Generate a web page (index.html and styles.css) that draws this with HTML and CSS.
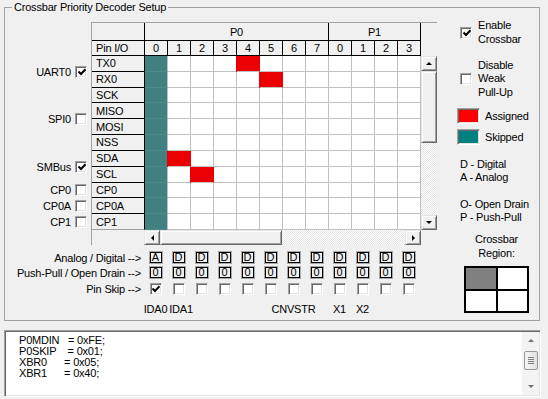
FILE: index.html
```html
<!DOCTYPE html>
<html lang="en">
  <head>
    <meta charset="UTF-8" />
    <meta name="viewport" content="width=device-width, initial-scale=1.0" />
    <title>Crossbar Priority Decoder Setup</title>
    <link rel="stylesheet" href="styles.css">
  </head>
  <body>
    <fieldset id="crossbar">
      <legend>Crossbar Priority Decoder Setup</legend>

      <div id="mainSide">
        <div id="topSide">
          <!-- peripherals, lined up with the pin rows -->
          <div id="periph">
            <div class="per uart">UART0 <span class="cb"><svg width="8" height="8" viewBox="0 0 8 8"><polyline points="0.5,3.5 3,6 7.5,1.2" /></svg></span></div>
            <div class="per spi">SPI0 <span class="cb"></span></div>
            <div class="per smb">SMBus <span class="cb"><svg width="8" height="8" viewBox="0 0 8 8"><polyline points="0.5,3.5 3,6 7.5,1.2" /></svg></span></div>
            <div class="per cp0">CP0 <span class="cb"></span></div>
            <div class="per cp0a">CP0A <span class="cb"></span></div>
            <div class="per cp1">CP1 <span class="cb"></span></div>
          </div>

          <div id="table">
            <div class="h1"><b></b><b>P0</b><b>P1</b></div>
            <div class="h2">
              <b>Pin I/O</b><b>0</b><b>1</b><b>2</b><b>3</b><b>4</b><b>5</b><b>6</b><b>7</b><b>0</b><b>1</b><b>2</b><b>3</b>
            </div>
            <div class="body">
              <div class="rows">
                <span>TX0</span><i class="s"></i><i></i><i></i><i></i><i class="a"></i><i></i><i></i><i></i><i></i><i></i><i></i><i></i>
                <span>RX0</span><i class="s"></i><i></i><i></i><i></i><i></i><i class="a"></i><i></i><i></i><i></i><i></i><i></i><i></i>
                <span>SCK</span><i class="s"></i><i></i><i></i><i></i><i></i><i></i><i></i><i></i><i></i><i></i><i></i><i></i>
                <span>MISO</span><i class="s"></i><i></i><i></i><i></i><i></i><i></i><i></i><i></i><i></i><i></i><i></i><i></i>
                <span>MOSI</span><i class="s"></i><i></i><i></i><i></i><i></i><i></i><i></i><i></i><i></i><i></i><i></i><i></i>
                <span>NSS</span><i class="s"></i><i></i><i></i><i></i><i></i><i></i><i></i><i></i><i></i><i></i><i></i><i></i>
                <span>SDA</span><i class="s"></i><i class="a"></i><i></i><i></i><i></i><i></i><i></i><i></i><i></i><i></i><i></i><i></i>
                <span>SCL</span><i class="s"></i><i></i><i class="a"></i><i></i><i></i><i></i><i></i><i></i><i></i><i></i><i></i><i></i>
                <span>CP0</span><i class="s"></i><i></i><i></i><i></i><i></i><i></i><i></i><i></i><i></i><i></i><i></i><i></i>
                <span>CP0A</span><i class="s"></i><i></i><i></i><i></i><i></i><i></i><i></i><i></i><i></i><i></i><i></i><i></i>
                <span>CP1</span><i class="s"></i><i></i><i></i><i></i><i></i><i></i><i></i><i></i><i></i><i></i><i></i><i></i>
              </div>
              <div class="vs">
                <div class="btn up"></div>
                <div class="btn vthumb"></div>
                <div class="track"></div>
                <div class="btn dn"></div>
              </div>
            </div>
            <div class="hs">
              <div class="btn lt"></div>
              <div class="btn hthumb"></div>
              <div class="track"></div>
              <div class="btn rt"></div>
            </div>
          </div>
        </div>

        <div class="ctl first">
          <div class="lbl">Analog / Digital --&gt;</div>
          <span class="box">A</span><span class="box">D</span><span class="box">D</span><span class="box">D</span><span class="box">D</span><span class="box">D</span><span class="box">D</span><span class="box">D</span><span class="box">D</span><span class="box">D</span><span class="box">D</span><span class="box">D</span>
        </div>
        <div class="ctl">
          <div class="lbl">Push-Pull / Open Drain --&gt;</div>
          <span class="box">0</span><span class="box">0</span><span class="box">0</span><span class="box">0</span><span class="box">0</span><span class="box">0</span><span class="box">0</span><span class="box">0</span><span class="box">0</span><span class="box">0</span><span class="box">0</span><span class="box">0</span>
        </div>
        <div class="ctl skip">
          <div class="lbl">Pin Skip --&gt;</div>
          <span class="cb"><svg width="8" height="8" viewBox="0 0 8 8"><polyline points="0.5,3.5 3,6 7.5,1.2" /></svg></span><span class="cb"></span><span class="cb"></span><span class="cb"></span><span class="cb"></span><span class="cb"></span><span class="cb"></span><span class="cb"></span><span class="cb"></span><span class="cb"></span><span class="cb"></span><span class="cb"></span>
        </div>
        <div class="ports">
          <span>IDA0</span><span class="ida1">IDA1</span><span></span><span></span><span></span><span></span><span>CNVSTR</span><span></span><span>X1</span><span>X2</span>
        </div>
      </div>

      <div id="rightSide">
        <div class="opt enable">
          <span class="cb"><svg width="8" height="8" viewBox="0 0 8 8"><polyline points="0.5,3.5 3,6 7.5,1.2" /></svg></span>
          <div>Enable<br />Crossbar</div>
        </div>
        <div class="opt pullup">
          <span class="cb"></span>
          <div>Disable<br />Weak<br />Pull-Up</div>
        </div>
        <div class="key assigned"><span class="sw red"></span>Assigned</div>
        <div class="key skipped"><span class="sw teal"></span>Skipped</div>
        <div class="note da">D - Digital<br />A - Analog</div>
        <div class="note op">O- Open Drain<br />P - Push-Pull</div>
        <div class="region-title">Crossbar<br />Region:</div>
        <div class="region"><i></i><i></i><i></i><i></i></div>
      </div>
    </fieldset>

    <div id="code">
      <pre>P0MDIN   = 0xFE;
P0SKIP    = 0x01;
XBR0      = 0x05;
XBR1      = 0x40;</pre>
      <div class="sb">
        <div class="sb-up"></div>
        <div class="sb-thumb"></div>
        <div class="sb-fill"></div>
        <div class="sb-dn"></div>
      </div>
    </div>
  </body>
</html>
```

FILE: styles.css
```css
* {
  padding: 0;
  margin: 0;
  box-sizing: border-box;
}
body {
  background: #f0f0f0;
  color: #000;
  font-family: "Liberation Sans", Arial, sans-serif;
  font-size: 11px;
  letter-spacing: -0.2px;
}

#crossbar {
  margin-left: 4px;
  width: 536px;
  height: 321px;
  min-width: 0;
  border: 1px solid #a0a0a0;
  display: flex;
}
#crossbar legend {
  margin-left: 7px;
  padding: 0 2px;
  line-height: 14px;
}

#mainSide {
  width: 432px;
}
#topSide {
  display: flex;
  margin-top: 8px;
}

/* left column of peripherals */
#periph {
  width: 86px;
  height: 208px;
  display: grid;
  grid-template-rows: 34px repeat(11, 1fr);
}
.per {
  display: flex;
  align-items: center;
  justify-content: flex-end;
  gap: 4px;
  padding-right: 4px;
}
.uart { grid-row: 2 / 4; }
.spi { grid-row: 4 / 8; }
.smb { grid-row: 8 / 10; }
.cp0 { grid-row: 10 / 11; }
.cp0a { grid-row: 11 / 12; }
.cp1 { grid-row: 12 / 13; }

/* checkbox */
.cb {
  width: 12px;
  height: 12px;
  background: #fff;
  border: 1px solid;
  border-color: #a0a0a0 #fff #fff #a0a0a0;
  box-shadow: inset 1px 1px 0 #696969, inset -1px -1px 0 #e3e3e3;
  display: flex;
  align-items: center;
  justify-content: center;
}
.cb svg {
  margin: 0 0 0 1px;
}
.cb polyline {
  fill: none;
  stroke: #000;
  stroke-width: 2;
}

/* pin table */
#table {
  border-left: 1px solid #a0a0a0;
  border-top: 1px solid #a0a0a0;
}
.h1 {
  display: grid;
  grid-template-columns: 53px 184px 92px;
  height: 18px;
}
.h2 {
  display: grid;
  grid-template-columns: 53px repeat(12, 23px);
  height: 15px;
}
.h1 b,
.h2 b {
  font-weight: normal;
  background: #f0f0f0;
  border-right: 1px solid #000;
  border-bottom: 1px solid #000;
  display: flex;
  align-items: center;
  justify-content: center;
}
.h2 b:first-child {
  justify-content: flex-start;
  padding-left: 4px;
}
.body {
  display: flex;
}
.rows {
  display: grid;
  grid-template-columns: 53px repeat(12, 23px);
  grid-template-rows: repeat(11, 1fr);
  height: 174px;
}
.rows span {
  background: #f0f0f0;
  border-right: 1px solid #000;
  border-bottom: 1px solid #000;
  padding-left: 4px;
  display: flex;
  align-items: center;
}
.rows span:last-of-type {
  border-bottom-color: #a0a0a0;
}
.rows i {
  background: #fff;
  border-right: 1px solid #c0c0c0;
  border-bottom: 1px solid #c0c0c0;
}
.rows i.s {
  background: #408080;
  border-bottom-color: #4f8a8a;
}
.rows i.a {
  background: #ea0000;
  border-right-color: #ea0000;
  box-shadow: -1px 0 0 #ea0000;
}

/* classic scroll bars */
.btn {
  background: #f0f0f0;
  border: 1px solid;
  border-color: #e3e3e3 #696969 #696969 #e3e3e3;
  box-shadow: inset 1px 1px 0 #fff, inset -1px -1px 0 #a0a0a0;
  display: flex;
  align-items: center;
  justify-content: center;
}
.track {
  flex: 1;
  background: repeating-conic-gradient(#fff 0 25%, #e4e4e4 0 50%) 0 0 / 2px 2px;
}
.vs {
  width: 16px;
  height: 174px;
  display: flex;
  flex-direction: column;
}
.vs .up,
.vs .dn {
  height: 15px;
}
.vthumb {
  height: 72px;
}
.hs {
  margin-left: 52px;
  width: 277px;
  height: 15px;
  display: flex;
}
.hs .lt,
.hs .rt {
  width: 16px;
}
.hthumb {
  width: 122px;
}
.up::before,
.dn::before,
.lt::before,
.rt::before {
  content: "";
  border: 3px solid transparent;
}
.up::before {
  border-top-width: 0;
  border-bottom-color: #000;
}
.dn::before {
  border-bottom-width: 0;
  border-top-color: #000;
}
.lt::before {
  border-left-width: 0;
  border-right-color: #000;
}
.rt::before {
  border-right-width: 0;
  border-left-color: #000;
}

/* rows under the table */
.ctl {
  display: grid;
  grid-template-columns: 139px repeat(12, 23px);
  justify-items: center;
  align-items: center;
  height: 15px;
}
.ctl.first {
  margin-top: 5px;
}
.ctl.skip {
  height: 18px;
}
.ctl .lbl {
  justify-self: stretch;
  text-align: right;
  padding-right: 3px;
  white-space: nowrap;
}
.box {
  width: 12px;
  height: 11px;
  border: 1px solid #000;
  box-shadow: 0 0 0 1px #a8a8a8;
  display: flex;
  align-items: center;
  justify-content: center;
  line-height: 9px;
  letter-spacing: 0;
}
.ports {
  display: flex;
  margin: 5px 0 0 139px;
  height: 13px;
  line-height: 13px;
}
.ports span {
  width: 23px;
  display: flex;
  justify-content: center;
  white-space: nowrap;
}
.ports .ida1 {
  padding-left: 5px;
}

/* right column */
#rightSide {
  flex: 1;
  padding-left: 19px;
}
.opt {
  display: flex;
  align-items: center;
  gap: 6px;
  margin-left: 4px;
  line-height: 13.5px;
}
.enable {
  margin-top: 5px;
}
.pullup {
  margin-top: 12.5px;
}
.key {
  display: flex;
  align-items: center;
  gap: 5px;
  margin-left: 1px;
  height: 16px;
}
.assigned {
  margin-top: 9px;
}
.skipped {
  margin-top: 5px;
}
.sw {
  width: 23px;
  height: 16px;
  border: 1px solid;
  border-color: #a0a0a0 #fff #fff #a0a0a0;
  box-shadow: inset 1px 1px 0 #696969, inset -1px -1px 0 #e3e3e3;
}
.red {
  background: #ff0000;
}
.teal {
  background: #008080;
}
.note {
  margin-left: 4px;
  line-height: 13px;
}
.da {
  margin-top: 13px;
}
.op {
  margin-top: 14px;
}
.region-title {
  margin: 9px 0 0 8px;
  width: 65px;
  text-align: center;
  line-height: 13.5px;
}
.region {
  margin: 6px 0 0 8px;
  width: 65px;
  display: grid;
  grid-template-columns: 30px 29px;
  grid-template-rows: 21px 20px;
  gap: 2px;
  padding: 2px;
  background: #000;
}
.region i {
  background: #fff;
}
.region i:first-child {
  background: #808080;
}

/* generated code box */
#code {
  margin: 9px 0 0 4px;
  width: 537px;
  height: 67px;
  background: #fff;
  border: 1px solid;
  border-color: #a0a0a0 #fff #fff #a0a0a0;
  box-shadow: inset 1px 1px 0 #696969, inset -1px -1px 0 #e3e3e3;
  display: flex;
  padding: 1px;
}
#code pre {
  flex: 1;
  font-family: inherit;
  line-height: 11px;
  padding: 3px 0 0 13px;
}
.sb {
  width: 17px;
  background: #f3f3f3;
  display: flex;
  flex-direction: column;
  align-items: center;
}
.sb-up,
.sb-dn {
  height: 17px;
  width: 100%;
  display: flex;
  align-items: center;
  justify-content: center;
}
.sb-up::before,
.sb-dn::before {
  content: "";
  border: 3px solid transparent;
}
.sb-up::before {
  border-top-width: 0;
  border-bottom-color: #707070;
}
.sb-dn::before {
  border-bottom-width: 0;
  border-top-color: #707070;
}
.sb-thumb {
  margin: 2px 0 0 1px;
  width: 14px;
  height: 19px;
  border: 1px solid #979797;
  border-radius: 2px;
  background: linear-gradient(90deg, #f4f4f4, #e1e1e1);
  display: flex;
  align-items: center;
  justify-content: center;
}
.sb-thumb::before {
  content: "";
  width: 6px;
  height: 7px;
  background: repeating-linear-gradient(#7f7f7f 0 1px, transparent 1px 2px);
}
.sb-fill {
  flex: 1;
}
```
